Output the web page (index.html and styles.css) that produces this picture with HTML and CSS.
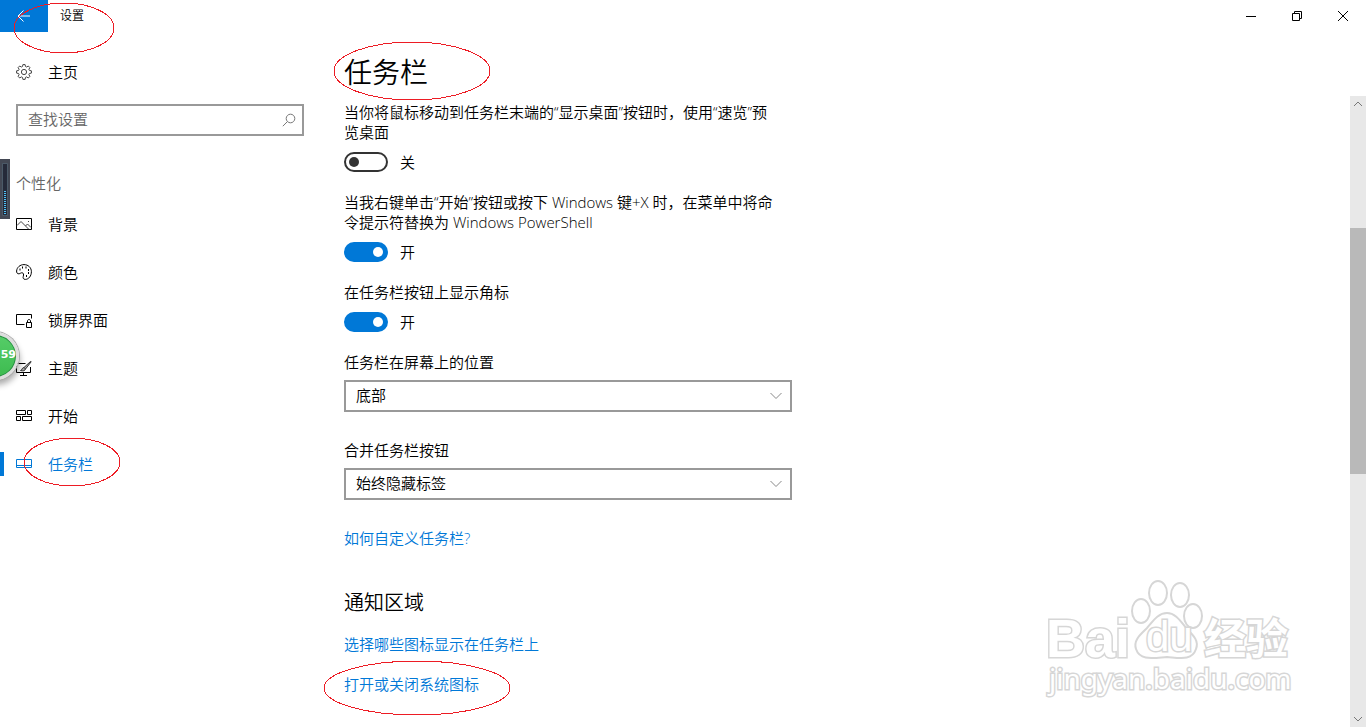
FILE: index.html
```html
<!DOCTYPE html>
<html lang="zh-CN">
<head>
<meta charset="utf-8">
<title>设置</title>
<link rel="stylesheet" href="styles.css">
</head>
<body>
<div class="window">
  <header class="titlebar">
    <button class="back" aria-label="返回"><svg width="16" height="16" viewBox="0 0 16 16"><path d="M14 8H2.500M7.500 2.500 2 8l5.500 5.500"/></svg></button>
    <span class="title">设置</span>
    <div class="controls">
      <button class="control" aria-label="最小化"><svg width="10" height="10" viewBox="0 0 10 10"><path d="M0 5.500h10"/></svg></button>
      <button class="control" aria-label="还原"><svg width="10" height="10" viewBox="0 0 10 10"><path d="M.5 2.500h7v7h-7zM2.500 2.500v-2h7v7h-2"/></svg></button>
      <button class="control" aria-label="关闭"><svg width="10" height="10" viewBox="0 0 10 10"><path d="M0 0l10 10M10 0 0 10"/></svg></button>
    </div>
  </header>
  <div class="layout">
    <nav class="sidebar">
      <a class="item" href="#home"><svg class="icon gear" width="16" height="16" viewBox="0 0 16 16"><path d="M6.900.6h2.200l.4 1.900 1.100.5L12.300 2l1.600 1.600-1 1.700.5 1.100 2 .4v2.300l-2 .4-.5 1.200 1 1.600-1.600 1.700-1.700-1.100-1.100.5-.4 2H6.900l-.4-2-1.100-.5L3.700 14l-1.600-1.700 1-1.600-.5-1.200-2-.4V6.800l2-.4.5-1.100-1-1.700L3.700 2l1.700 1 1.100-.5z"/><circle cx="8" cy="8" r="2.600"/></svg>主页</a>
      <div class="search">
        <input class="search-input" type="text" placeholder="查找设置" aria-label="查找设置">
        <svg class="search-icon" width="14" height="14" viewBox="0 0 14 14"><circle cx="8.500" cy="5.500" r="4.300"/><path d="M5.400 8.600.8 13.200"/></svg>
      </div>
      <h2 class="group">个性化</h2>
      <a class="item" href="#background"><svg class="icon" width="16" height="16" viewBox="0 0 16 16"><path d="M.5 2.500h15v11H.5z"/><path d="M1 9.500l4-4 8 8M9.500 10l2-2L15 11.500M12 5.500h1" stroke="#444"/></svg>背景</a>
      <a class="item" href="#colors"><svg class="icon" width="16" height="16" viewBox="0 0 16 16"><path d="M.6 7C.9 3.400 4 .6 8 .6c4.200 0 7.400 3 7.400 7.100 0 4.300-2.800 7.700-6 7.700-2.200 0-2.600-1.500-2.100-3.100.5-1.800.3-3.200-1-3.500-1.300-.3-2 .9-3.400 1C1.200 9.900.5 8.700.6 7z"/><path d="M3.500 5.500h1M6 3.500h1M9.500 3.500h1M12 6h1M12 9h1M10 12h1" stroke-width="2"/></svg>颜色</a>
      <a class="item" href="#lock"><svg class="icon" width="16" height="16" viewBox="0 0 16 16"><path d="M8.500 12.500h-8v-10h15v4M10.500 10.500h5v5h-5zM11.500 10.500V9c0-2 3-2 3 0v1.500"/></svg>锁屏界面</a>
      <a class="item" href="#themes"><svg class="icon" width="16" height="16" viewBox="0 0 16 16"><path d="M9.500 3.500h-9v9h14V7M4 15.500h7M7.500 12.500v3"/><path d="M14.700 1.300 8 7.500l1.500 1.500 5.700-7.200zM8 7.500C5.700 7.700 6.500 10 4.500 10.500c2.500.8 4.700.2 5-1.500" stroke="#333" fill="#aaa"/></svg>主题</a>
      <a class="item" href="#start"><svg class="icon" width="16" height="16" viewBox="0 0 16 16"><path d="M.5 2.500h9v4h-9zM11.500 2.500h4v4h-4zM.5 8.500h4v4h-4zM6.500 8.500h9v4h-9z"/></svg>开始</a>
      <a class="item selected" href="#taskbar" aria-current="page"><svg class="icon" width="16" height="16" viewBox="0 0 16 16"><path d="M.5 3.500h15v8H.5zM.5 9.500h15"/></svg>任务栏</a>
    </nav>
    <main class="content">
      <h1 class="heading">任务栏</h1>
      <div class="pane">
        <div class="settings">
          <section class="setting">
            <label for="peek">当你将鼠标移动到任务栏末端的“显示桌面”按钮时，使用“速览”预览桌面</label>
            <div class="switch"><input class="toggle" id="peek" type="checkbox" role="switch"><span>关</span></div>
          </section>
          <section class="setting">
            <label for="powershell">当我右键单击“开始”按钮或按下 Windows 键+X 时，在菜单中将命令提示符替换为 Windows PowerShell</label>
            <div class="switch"><input class="toggle" id="powershell" type="checkbox" role="switch" checked><span>开</span></div>
          </section>
          <section class="setting">
            <label for="badges">在任务栏按钮上显示角标</label>
            <div class="switch"><input class="toggle" id="badges" type="checkbox" role="switch" checked><span>开</span></div>
          </section>
          <section class="choice">
            <label for="position">任务栏在屏幕上的位置</label>
            <div class="picker"><select class="select" id="position"><option>底部</option></select><svg class="chevron" width="12" height="8" viewBox="0 0 12 8"><path d="M.5 1 6 6.500 11.500 1"/></svg></div>
          </section>
          <section class="choice">
            <label for="combine">合并任务栏按钮</label>
            <div class="picker"><select class="select" id="combine"><option>始终隐藏标签</option></select><svg class="chevron" width="12" height="8" viewBox="0 0 12 8"><path d="M.5 1 6 6.500 11.500 1"/></svg></div>
          </section>
          <a class="link" href="#help">如何自定义任务栏?</a>
          <h2 class="subheading">通知区域</h2>
          <div class="links">
            <a class="link" href="#icons">选择哪些图标显示在任务栏上</a>
            <a class="link" href="#system-icons">打开或关闭系统图标</a>
          </div>
        </div>
        <div class="scrollbar">
          <svg width="16" height="16" viewBox="0 0 16 16"><path d="M4 10l4-4 4 4"/></svg>
          <div class="track"><div class="thumb"></div></div>
          <svg width="16" height="16" viewBox="0 0 16 16"><path d="M4 6l4 4 4-4"/></svg>
        </div>
      </div>
    </main>
  </div>

  <svg class="gauge" width="10" height="60" viewBox="0 0 10 60"><rect width="10" height="60" fill="#434854"/><rect x="2" y="4" width="6" height="53" rx="1" fill="#4b5a68"/><rect x="3" y="5" width="4" height="51" fill="#252a39"/><path d="M5 32v24" stroke="#4fc3f7" stroke-width="2" stroke-dasharray="1 1"/></svg>
  <div class="meter"><span>59</span></div>

  <svg class="watermark" width="260" height="130" viewBox="0 0 260 130">
    <text class="brand" x="6" y="87">Bai</text>
    <ellipse cx="118" cy="23" rx="9" ry="12"/><ellipse cx="140" cy="25" rx="9" ry="12"/><ellipse cx="101" cy="41" rx="9" ry="12"/><ellipse cx="153" cy="46" rx="9" ry="12"/>
    <path d="M127 43c9 0 14 9 20 16 7 7 12 12 9 20-4 12-16 9-29 8-14 1-27 4-31-8-3-9 5-15 11-21 6-7 11-15 20-15z"/>
    <text class="du" x="106" y="81">du</text>
    <text class="han" x="164" y="84">经验</text>
    <text class="domain" x="9" y="119">jingyan.baidu.com</text>
  </svg>
  <svg class="marks" width="1366" height="727" viewBox="0 0 1366 727"><ellipse cx="64" cy="28" rx="50" ry="25"/><ellipse cx="412" cy="71" rx="78" ry="29"/><ellipse cx="72" cy="462" rx="48" ry="24"/><ellipse cx="417" cy="688" rx="93" ry="27"/></svg>
</div>
</body>
</html>
```
FILE: styles.css
```css
* { box-sizing: border-box; }
body {
  margin: 0;
  background: #fff;
  color: #000;
  font: 350 15px/20px "Open Sans", "Noto Sans CJK SC", sans-serif;
}
h1, h2 { margin: 0; font-weight: 350; }
button { padding: 0; border: 0; background: none; }
a { text-decoration: none; }
svg { fill: none; stroke: currentColor; }
.window {
  position: relative;
  display: flex;
  flex-direction: column;
  height: 100vh;
  overflow: hidden;
}
.titlebar { display: flex; align-items: center; height: 32px; }
.back {
  display: flex;
  align-items: center;
  justify-content: center;
  width: 48px;
  height: 32px;
  background: #0078d7;
  color: #fff;
}
.title { padding-left: 12px; font-size: 12px; }
.controls { display: flex; margin-left: auto; }
.control {
  display: flex;
  align-items: center;
  justify-content: center;
  width: 46px;
  height: 32px;
  color: #000;
}
.layout { display: flex; flex: 1; min-height: 0; }
.sidebar { flex: none; width: 320px; padding-top: 16px; }
.item {
  display: flex;
  align-items: center;
  gap: 16px;
  height: 48px;
  padding-left: 16px;
  color: #000;
}
.gear { stroke: #444; }
.selected {
  color: #0078d7;
  background: linear-gradient(#0078d7, #0078d7) 0 center / 4px 24px no-repeat;
}
.search { position: relative; margin: 8px 16px 0; }
.search-input {
  display: block;
  width: 100%;
  height: 32px;
  padding: 0 32px 2px 10px;
  border: 2px solid #999;
  background: #fff;
  font: inherit;
}
.search-input::placeholder { color: #666; opacity: 1; }
.search-icon { position: absolute; right: 8px; top: 9px; color: #777; }
.group { padding: 37px 16px 7px; font-size: 15px; color: #666; }
.content { display: flex; flex: 1; flex-direction: column; min-width: 0; }
.heading { padding: 20px 24px 4px; font-size: 28px; line-height: 40px; }
.pane { display: flex; flex: 1; min-height: 0; }
.settings { flex: 1; min-width: 0; padding: 6px 24px 0; overflow: hidden; }
.setting { max-width: 438px; margin-bottom: 20px; }
.setting label, .choice label { display: block; }
.switch { display: flex; align-items: center; gap: 12px; margin-top: 10px; height: 20px; }
.toggle {
  appearance: none;
  display: flex;
  align-items: center;
  width: 44px;
  height: 20px;
  margin: 0;
  padding: 0 3px;
  border: 2px solid #333;
  border-radius: 10px;
}
.toggle::before { content: ""; width: 10px; height: 10px; border-radius: 50%; background: #333; }
.toggle:checked { justify-content: flex-end; border-color: #0078d7; background: #0078d7; }
.toggle:checked::before { background: #fff; }
.choice { max-width: 448px; margin-bottom: 28px; }
.picker { position: relative; margin-top: 8px; }
.select {
  appearance: none;
  display: block;
  width: 100%;
  height: 32px;
  padding: 0 32px 2px 10px;
  border: 2px solid #999;
  border-radius: 0;
  background: #fff;
  color: #000;
  font: inherit;
}
.chevron { position: absolute; right: 10px; top: 12px; color: #888; }
.link { display: block; color: #0078d7; }
.subheading { margin: 41px 0 17px; font-size: 20px; line-height: 28px; }
.links { display: flex; flex-direction: column; gap: 20px; }
.scrollbar {
  display: flex;
  flex: none;
  flex-direction: column;
  width: 16px;
  background: #e8e8e8;
  color: #777;
}
.track { flex: 1; padding-top: 116px; }
.thumb { height: 246px; background: #b9b9b9; }
.gauge { position: absolute; left: 0; top: 159px; stroke: none; }
.meter {
  position: absolute;
  left: -29px;
  top: 332px;
  width: 48px;
  height: 48px;
  padding: 11px 0 0;
  border: 3px solid #ddd;
  border-radius: 50%;
  background: linear-gradient(#56cd68, #3dbb50);
  box-shadow: inset 0 0 0 1px #268a43, 0 0 0 1px #aaa, 1px 5px 6px #0005;
  color: #fff;
  font: 700 11px/18px "DejaVu Sans", sans-serif;
  text-align: right;
}
.watermark {
  position: absolute;
  right: 66px;
  bottom: 27px;
  fill: #fff;
  stroke: #d6d6d6;
  stroke-width: 2px;
  pointer-events: none;
}
.watermark text { paint-order: stroke; stroke-width: 3px; }
.brand { font: 700 54px "Liberation Sans", sans-serif; }
.du { font: 400 42px "Liberation Sans", sans-serif; }
.han { font: 700 42px "Noto Sans CJK SC", sans-serif; }
.domain { font: 400 28px "Noto Sans", sans-serif; }
.marks { position: absolute; left: 0; top: 0; stroke: #ed1c24; pointer-events: none; shape-rendering: crispEdges; }
```
